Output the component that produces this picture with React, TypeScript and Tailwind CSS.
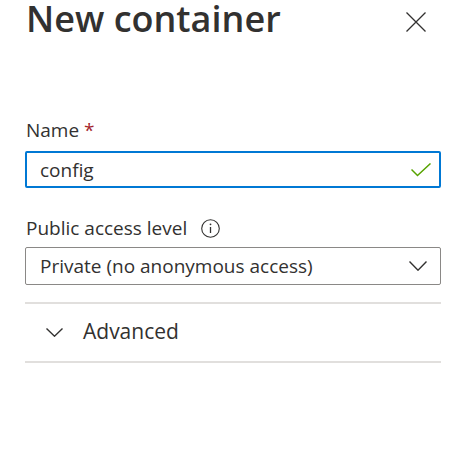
import React, { useState } from "react";

const font = { fontFamily: '"Open Sans", "Noto Sans", Arial, sans-serif' };

function CloseIcon() {
  return (
    <svg width="20" height="20" viewBox="0 0 20 20" fill="none" stroke="#323130" strokeWidth="1.3">
      <path d="M0.5 0.5 L19.5 19.5 M19.5 0.5 L0.5 19.5" />
    </svg>
  );
}

function Chevron({ w, h }: { w: number; h: number }) {
  return (
    <svg width={w} height={h} viewBox={`0 0 ${w} ${h}`} fill="none" stroke="#323130" strokeWidth="1.4">
      <path d={`M0.5 0.5 L${w / 2} ${h - 0.8} L${w - 0.5} 0.5`} />
    </svg>
  );
}

export default function App() {
  const [name, setName] = useState("config");
  const [open, setOpen] = useState(false);

  return (
    <div className="w-[473px] h-[466px] bg-white text-[#323130] pt-[1px]" style={font}>
      <div className="pl-[25px] pr-[32px]">
        <div className="flex items-start justify-between">
          <h1 className="pl-[1px] text-[36px] leading-[36px] font-semibold">New container</h1>
          <button className="mt-[11px] mr-[15px]" aria-label="Close">
            <CloseIcon />
          </button>
        </div>

        <label className="block mt-[81px] pl-[1px] text-[19px] leading-[24px]">
          Name <span className="text-[#a4262c]">*</span>
        </label>
        <div className="mt-[9px] h-[37px] border-2 border-[#0078d4] rounded-[2px] flex items-center pl-[13px] pr-[8px]">
          <input
            autoFocus
            value={name}
            onChange={e => setName(e.target.value)}
            className="flex-1 min-w-0 outline-none text-[19px] leading-[24px] bg-transparent caret-[#323130]"
          />
          <svg width="20" height="14" viewBox="0 0 20 14" fill="none" stroke="#57a300" strokeWidth="1.5">
            <path d="M0.5 6.5 L6.5 12.5 L19.5 0.5" />
          </svg>
        </div>

        <div className="mt-[28px] flex items-center pl-[1px] text-[19px] leading-[24px]">
          <span>Public access level</span>
          <svg className="ml-[14px]" width="19" height="19" viewBox="0 0 19 19" fill="none" stroke="#323130">
            <circle cx="9.5" cy="9.5" r="8.8" strokeWidth="1.1" />
            <path d="M9.5 8 V14" strokeWidth="1.3" />
            <circle cx="9.5" cy="5.3" r="0.9" fill="#323130" stroke="none" />
          </svg>
        </div>
        <button className="mt-[7px] w-full h-[38px] border border-[#8a8886] rounded-[2px] flex items-center justify-between pl-[14px] pr-[13px] text-[19px] leading-[24px]">
          <span>Private (no anonymous access)</span>
          <Chevron w={18} h={10} />
        </button>

        <div className="mt-[17px] border-t-2 border-[#e1dfdd]" />
        <button
          className="w-full h-[57px] flex items-center pl-[21px] text-[21px] leading-[26px]"
          onClick={() => setOpen(!open)}
        >
          <Chevron w={17} h={9} />
          <span className="ml-[20px] -mt-[4px]">Advanced</span>
        </button>
        <div className="border-t-2 border-[#e1dfdd]" />
      </div>
    </div>
  );
}
